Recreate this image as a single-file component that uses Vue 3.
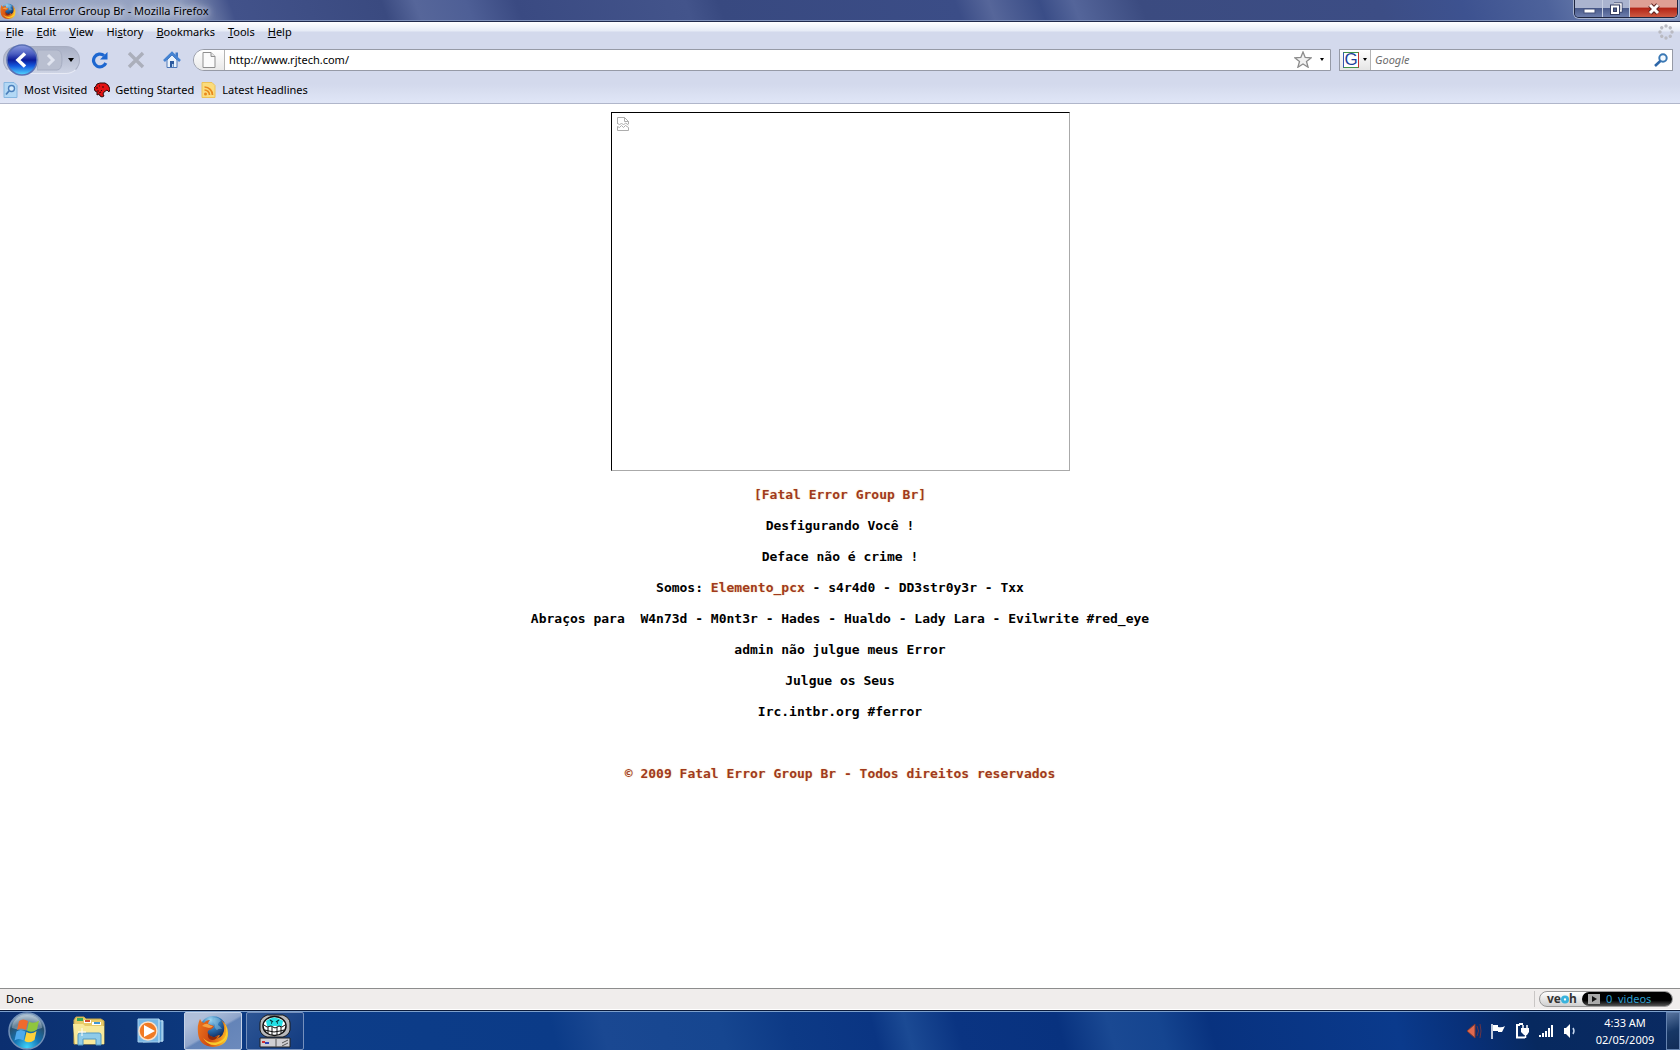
<script setup>
import { ref } from 'vue'

const menus = [
  ['', 'F', 'ile'],
  ['', 'E', 'dit'],
  ['', 'V', 'iew'],
  ['Hi', 's', 'tory'],
  ['', 'B', 'ookmarks'],
  ['', 'T', 'ools'],
  ['', 'H', 'elp'],
]
const address = ref('http://www.rjtech.com/')
const query = ref('')
const dots = [0, 45, 90, 135, 180, 225, 270, 315]
</script>

<template>
  <div class="desktop">
    <header class="titlebar">
      <svg class="fox-small" viewBox="0 0 32 32" aria-hidden="true">
        <use href="#fox" />
      </svg>
      <h1 class="title">Fatal Error Group Br - Mozilla Firefox</h1>
      <div class="window-buttons">
        <button class="wb min" aria-label="Minimize">
          <svg width="14" height="14" viewBox="0 0 14 14"><rect x="2" y="7" width="11" height="4" fill="#fff" stroke="#43517c" /></svg>
        </button>
        <button class="wb max" aria-label="Restore">
          <svg width="14" height="14" viewBox="0 0 14 14">
            <path d="M5 2h7v7h-2" fill="none" stroke="#353f63" stroke-width="3" />
            <path d="M5 2h7v7h-2" fill="none" stroke="#fff" stroke-width="1.500" />
            <rect x="3" y="4.500" width="6" height="6.500" fill="none" stroke="#353f63" stroke-width="4" />
            <rect x="3" y="4.500" width="6" height="6.500" fill="none" stroke="#fff" stroke-width="2" />
          </svg>
        </button>
        <button class="wb close" aria-label="Close">
          <svg width="14" height="14" viewBox="0 0 14 14">
            <path d="M3 3l8 8M11 3l-8 8" stroke="#5e2320" stroke-width="5" />
            <path d="M3 3l8 8M11 3l-8 8" stroke="#fff" stroke-width="3" />
          </svg>
        </button>
      </div>
    </header>

    <div class="chrome">
      <nav class="menubar">
        <button v-for="m in menus" :key="m[2]" class="menu">{{ m[0] }}<u>{{ m[1] }}</u>{{ m[2] }}</button>
        <svg class="throbber" width="16" height="16" viewBox="0 0 16 16" aria-hidden="true">
          <circle v-for="d in dots" :key="d" cx="8" cy="2" r="1.700" fill="#b9bac2" :transform="`rotate(${d} 8 8)`" />
        </svg>
      </nav>

      <div class="navbar">
        <div class="backforward">
          <button class="plain back" aria-label="Back">
            <svg width="32" height="32" viewBox="0 0 32 32">
              <defs>
                <linearGradient id="backfill" x1="0" y1="0" x2="0" y2="1">
                  <stop offset="0" stop-color="#8d9ce0" />
                  <stop offset=".3" stop-color="#4a5dc0" />
                  <stop offset=".5" stop-color="#0c1c9a" />
                  <stop offset=".7" stop-color="#1458de" />
                  <stop offset="1" stop-color="#56dcff" />
                </linearGradient>
              </defs>
              <circle cx="16" cy="16" r="15" fill="url(#backfill)" stroke="#5a70b4" stroke-width="1.500" />
              <path d="M19 9.500l-7 6.500 7 6.500" fill="none" stroke="#fff" stroke-width="3.500" />
            </svg>
          </button>
          <button class="plain forward" aria-label="Forward">
            <svg width="26" height="22" viewBox="0 0 26 22">
              <path d="M0 1h20q5 0 5 10t-5 10h-20q3-10 0-20z" fill="#b9bfd0" stroke="#a6adc2" />
              <path d="M11 6l5 5-5 5" fill="none" stroke="#e1e5f0" stroke-width="3" />
            </svg>
          </button>
          <button class="plain recent" aria-label="Recent pages"><i class="caret"></i></button>
        </div>
        <button class="plain tool" aria-label="Reload">
          <svg width="18" height="18" viewBox="0 0 18 18">
            <path d="M14.800 12A6.400 6.400 0 1 1 13 4.500" fill="none" stroke="#1d67d0" stroke-width="3.200" />
            <path d="M16.500 1v7.500h-7.500z" fill="#1d67d0" />
          </svg>
        </button>
        <button class="plain tool" aria-label="Stop">
          <svg width="18" height="18" viewBox="0 0 18 18"><path d="M2 2l14 14M16 2L2 16" stroke="#abafbb" stroke-width="3.400" /></svg>
        </button>
        <button class="plain tool" aria-label="Home">
          <svg width="18" height="18" viewBox="0 0 18 18">
            <path d="M4 9v7.500h10V9L9 4z" fill="#eaf2fb" stroke="#4e78b8" />
            <path d="M12.500 1.500h2.500v5l-2.500-2z" fill="#4178c4" />
            <path d="M1 10L9 2l8 8" fill="none" stroke="#4583d2" stroke-width="2.600" />
            <path d="M7 16v-6h4v6" fill="#2c5a9e" />
            <path d="M9 13h1.500v3H9z" fill="#bcd7f3" />
          </svg>
        </button>

        <div class="urlbox">
          <span class="identity">
            <svg width="14" height="16" viewBox="0 0 14 16" aria-hidden="true">
              <path d="M1 .5h8l4 4v11H1z" fill="#fbfbfb" stroke="#8f8f8f" />
              <path d="M9 .5v4h4" fill="#e5e5e5" stroke="#8f8f8f" />
            </svg>
          </span>
          <input v-model="address" class="field" aria-label="Address" />
          <button class="plain star" aria-label="Bookmark this page">
            <svg width="18" height="17" viewBox="0 0 18 17">
              <path d="M9 1l2.200 5.500 5.800.4-4.500 3.600 1.600 5.700L9 13l-5.100 3.200 1.600-5.700L1 6.900l5.800-.4z" fill="#f1f1f1" stroke="#8c8c8c" stroke-width="1.300" />
            </svg>
          </button>
          <button class="plain drop" aria-label="History list"><i class="caret small"></i></button>
        </div>

        <div class="searchbox">
          <button class="plain engine" aria-label="Search engine">
            <span class="g">G</span><i class="caret small"></i>
          </button>
          <input v-model="query" class="field search" placeholder="Google" aria-label="Search" />
          <button class="plain go" aria-label="Search now">
            <svg width="14" height="14" viewBox="0 0 14 14">
              <circle cx="9" cy="5" r="3.700" fill="#f3f9ff" stroke="#3a78b4" stroke-width="2" />
              <path d="M6.300 8L1 13" stroke="#2d66a8" stroke-width="2.500" />
            </svg>
          </button>
        </div>
      </div>

      <div class="bookmarks">
        <a href="#" class="mark">
          <svg width="16" height="16" viewBox="0 0 16 16" aria-hidden="true">
            <path d="M1 .5h10l3 3v12H1z" fill="#b3d8f5" stroke="#86b6e0" />
            <circle cx="8.500" cy="6.500" r="3" fill="#d9edfc" stroke="#4b7fbb" stroke-width="1.400" />
            <path d="M6 9l-3 3.500" stroke="#4b7fbb" stroke-width="1.800" />
          </svg>
          Most Visited
        </a>
        <a href="#" class="mark">
          <svg width="16" height="16" viewBox="0 0 16 16" aria-hidden="true">
            <path d="M0 6l2-2 1-2 3-1 5 0 3 2 2 4-1 3-2-2-3 2-1 2 1 2-2 1-2-1-1-2-2 1 0-3-2-1z" fill="#e31212" stroke="#2c0808" />
            <path d="M2 6h2M3 9h2M5 4h1M5 11l2-1M8 5h2M7 8l1 1" stroke="#3b0505" />
          </svg>
          Getting Started
        </a>
        <a href="#" class="mark">
          <svg width="16" height="16" viewBox="0 0 16 16" aria-hidden="true">
            <path d="M1 .5h10l3 3v12H1z" fill="#fbdc7c" stroke="#ecc155" />
            <circle cx="4.500" cy="12" r="1.500" fill="#e8891c" />
            <path d="M3.500 8a5 5 0 0 1 5 5M3.500 5a8 8 0 0 1 8 8" fill="none" stroke="#e8891c" stroke-width="1.700" />
          </svg>
          Latest Headlines
        </a>
      </div>
    </div>

    <main class="page">
      <div class="missing">
        <svg width="12" height="14" viewBox="0 0 12 14" role="img" aria-label="Broken image">
          <path d="M.5 7V.5h7l4 4V7M7.500.5v4h4M.5 6l2 2 2-2 2 2 2-2 3 2M.5 13.500v-4l2 1 2-2 2 2 2-2 3 2v3z" fill="none" stroke="#adadad" />
        </svg>
      </div>
      <p class="rust">[Fatal Error Group Br]</p>
      <p>Desfigurando Você !</p>
      <p>Deface não é crime !</p>
      <p>Somos: <span class="rust">Elemento_pcx</span> - s4r4d0 - DD3str0y3r - Txx</p>
      <p>Abraços para&nbsp; W4n73d - M0nt3r - Hades - Hualdo - Lady Lara - Evilwrite #red_eye</p>
      <p>admin não julgue meus Error</p>
      <p>Julgue os Seus</p>
      <p>Irc.intbr.org #ferror</p>
      <p class="rust legal">© 2009 Fatal Error Group Br - Todos direitos reservados</p>
    </main>

    <footer class="status">
      <span>Done</span>
      <div class="veoh-cell">
        <div class="veoh">
          <span class="brand">ve<svg width="8" height="9" viewBox="0 0 9 9" aria-hidden="true"><circle cx="4.500" cy="4.500" r="4.500" fill="#39b3dc" /><circle cx="4.500" cy="4.500" r="1.300" fill="#fff" /></svg>h</span>
          <span class="videos">
            <svg width="12" height="10" viewBox="0 0 12 10" aria-hidden="true"><rect width="12" height="10" fill="#aaa" /><path d="M4 2l5 3-5 3z" fill="#111" /></svg>
            <span>0&nbsp; videos</span>
          </span>
        </div>
      </div>
    </footer>

    <div class="taskbar">
      <button class="plain start" aria-label="Start">
        <svg width="40" height="40" viewBox="0 0 40 40">
          <defs>
            <radialGradient id="orb" cx=".5" cy=".95" r=".9">
              <stop offset="0" stop-color="#3fd4fb" />
              <stop offset=".4" stop-color="#1474b4" />
              <stop offset=".75" stop-color="#28506f" />
              <stop offset="1" stop-color="#9fb8cc" />
            </radialGradient>
          </defs>
          <circle cx="20" cy="20" r="18" fill="url(#orb)" stroke="#7391b8" stroke-width="1.500" />
          <path d="M5 17a15 13 0 0 1 30 0q-15 5-30 0z" fill="#fff" opacity=".3" />
          <path d="M12 10q4-3 9 0l-2 9q-5-3-9 0z" fill="#ef6a2d" />
          <path d="M22 10.500q5 3 10-1l-2 9q-5 4-10 1z" fill="#90c63d" />
          <path d="M9.500 20.500q4-3 9 0l-2 9q-5-3-9 0z" fill="#4eaaed" />
          <path d="M19.500 21q5 3 10-1l-2 9q-5 4-10 1z" fill="#fcd13c" />
        </svg>
      </button>
      <button class="plain task" aria-label="Explorer">
        <svg width="34" height="32" viewBox="0 0 34 32">
          <path d="M2 5l2-3h8l2 2h15l3 2v23H2z" fill="#e8ca68" stroke="#c4a74a" />
          <path d="M5 3h6v3H5z" fill="#39a957" /><path d="M12 5h7v3h-7z" fill="#fff" /><path d="M13 5h5v2h-5z" fill="#d6512d" />
          <path d="M20 7h9v3h-9z" fill="#fff" /><path d="M22 7h6v2h-6z" fill="#4097d3" />
          <path d="M1 9h10l2 2h19v18H3z" fill="#f8e99b" />
          <path d="M6 30V20q0-2 2-2h19q2 0 2 2v10h-5v-6H11v6z" fill="#8fcbe8" stroke="#5399c4" />
          <path d="M10 13v8M6 17h8" stroke="#fff" />
        </svg>
      </button>
      <button class="plain task" aria-label="Media player">
        <svg width="28" height="28" viewBox="0 0 28 28">
          <path d="M6 3l20 1v20l-20 1z" fill="#5a9fd4" stroke="#a9d4f0" />
          <path d="M1 2h21v23H1z" fill="#78b7e4" stroke="#a4cfee" /><path d="M22 2v24M25 3v22" stroke="#c1e0f5" />
          <circle cx="11" cy="14" r="9" fill="#f17a24" stroke="#fbe1c9" stroke-width="1.500" />
          <path d="M7 8l11 6-11 6z" fill="#fff" />
        </svg>
      </button>
      <button class="plain task open active" aria-label="Firefox">
        <svg width="32" height="32" viewBox="0 0 32 32">
          <defs>
            <linearGradient id="foxfur" x1="0" y1=".3" x2="1" y2=".6">
              <stop offset="0" stop-color="#e8701c" />
              <stop offset=".5" stop-color="#cf4a12" />
              <stop offset=".8" stop-color="#f08a1a" />
              <stop offset="1" stop-color="#fbd12c" />
            </linearGradient>
            <radialGradient id="globe" cx=".4" cy=".15" r=".8">
              <stop offset="0" stop-color="#9cd6f0" />
              <stop offset=".45" stop-color="#2f78b8" />
              <stop offset="1" stop-color="#0b1a4c" />
            </radialGradient>
          </defs>
          <g id="fox">
            <circle cx="16" cy="14" r="13" fill="url(#globe)" />
            <path d="M17 3q5-1 7 3-3 1-3 4 2 1 4 4-3-1-5 1-3-2-2-5-3-3-1-7z" fill="#8dc3e2" opacity=".5" />
            <path d="M3 4q1 3 4 4 2-3 6-3-2 2-2 4 3 1 6 2-1 3-5 4-2 1-1 4 3 4 7 3 3-2 5-2-1 4-7 4 9 0 11-8 1-6-3-11 7 5 7 13 0 13-15 14Q2 31 1 18 0 10 3 4z" fill="url(#foxfur)" />
            <path d="M27 7q7 16-6 20-9 2-15-4 5 8 13 7 13-3 11-16-1-4-3-7z" fill="#fbd531" opacity=".9" />
            <path d="M11 18q2 4 6 4 3 0 4-2-1 5-6 5-5-1-4-7z" fill="#8f2a0a" />
            <path d="M5 11q3-3 6-2 2 2 5 2-1 2-4 2-4-1-7-2z" fill="#f6a041" />
          </g>
        </svg>
      </button>
      <button class="plain task open" aria-label="Messenger">
        <svg width="34" height="34" viewBox="0 0 34 34">
          <path d="M2 24h30v9H2z" fill="#cfcfd3" stroke="#222" />
          <path d="M9 1h16q7 3 7 8v7q-1 5-7 7H9q-6-2-7-7V9q0-5 7-8z" fill="#b9b9bb" stroke="#1a1a1a" />
          <ellipse cx="16.500" cy="12" rx="11.500" ry="9.500" fill="#fff" stroke="#111" stroke-width="1.500" />
          <path d="M8 7q8-7 17 0l-1 5H9z" fill="#25dfe5" />
          <path d="M12 6l3 2M21 6l-3 2M13 9h1M19 9h1" stroke="#063b3f" stroke-width="1.500" />
          <path d="M6 11l3 2 4-1 4 2 4-2 3 1 3-2M7 16l4 1 5 1 6-1 4-1M10 13v6M14 13v8M19 13v8M23 13v6" fill="none" stroke="#111" />
          <path d="M4 27h3v2H4z" fill="#d23030" /><path d="M7 28h4v2H7z" fill="#3146b8" />
          <path d="M24 29l6-3M24 32l6-3M18 25v8" stroke="#555" />
        </svg>
      </button>

      <div class="tray">
        <svg width="16" height="16" viewBox="0 0 16 16" aria-hidden="true"><path d="M1 8l8-7v14z" fill="#e06a50" stroke="#81382f" /><path d="M11 3q3 5 0 10M14 1q2 7 0 14" fill="none" stroke="#6b3444" /></svg>
        <svg width="16" height="16" viewBox="0 0 16 16" aria-hidden="true"><path d="M2 1v15" stroke="#fff" stroke-width="1.500" /><path d="M3 2h5v2q4 1 7-1l-3 6H8V8H3z" fill="#fff" /></svg>
        <svg width="16" height="16" viewBox="0 0 16 16" aria-hidden="true">
          <path d="M6 2H3v12.500h8" fill="none" stroke="#fff" stroke-width="2" />
          <path d="M5 0h4v2H5z" fill="#fff" />
          <path d="M7 5h8v4l-2 3h-3L7 9z" fill="#fff" />
          <path d="M9 2v4M13 2v4M11.500 11v4" stroke="#fff" stroke-width="1.500" />
        </svg>
        <svg width="16" height="16" viewBox="0 0 16 16" aria-hidden="true"><path d="M2 12v2M5 10v4M8 8v6M11 5v9M14 2v12" stroke="#fff" stroke-width="2" /></svg>
        <svg width="16" height="16" viewBox="0 0 16 16" aria-hidden="true"><path d="M2 5h2l4-4v14l-4-4H2z" fill="#fff" /><path d="M11 5q2 3 0 6" fill="none" stroke="#c5d6ee" stroke-width="1.500" /></svg>
      </div>
      <time class="clock" datetime="2009-05-02T04:33"><span>4:33 AM</span><span>02/05/2009</span></time>
      <button class="peek" aria-label="Show desktop"></button>
    </div>
  </div>
</template>

<style>
body {
  margin: 0;
}
</style>

<style scoped>
.desktop {
  display: flex;
  flex-direction: column;
  min-height: 100vh;
  background: #fff;
  color: #000;
  font: 11px/16px "Noto Sans", "Open Sans", sans-serif;
}
button,
input {
  font: inherit;
  color: inherit;
}
svg {
  display: block;
  flex: none;
}
.plain {
  display: flex;
  align-items: center;
  justify-content: center;
  padding: 0;
  border: 0;
  background: none;
}

.titlebar {
  display: flex;
  align-items: center;
  box-sizing: border-box;
  height: 22px;
  border-bottom: 1px solid #202a4c;
  box-shadow: inset 0 -1px #7f90b8;
  background: linear-gradient(70deg, #a3afca 0, #909dbe 11%, #42528a 14%, #3a4a80 23%, #56669a 25%, #4e5f96 28%, #3a4a82 31%, #43548b 41%, #384980 43%, #3b4d87 57%, #56669a 59%, #3a4d87 62%, #54659a 64%, #3b4b80 68%, #3c4d85 82%, #3d5290 87%, #4d629b 92%, #8294bd 98%);
}
.fox-small {
  width: 16px;
  height: 16px;
}
.title {
  flex: 1;
  margin: 0 0 0 5px;
  font-size: 11px;
  font-weight: 400;
  text-shadow: 0 0 6px #fff, 0 0 10px #dfe5f2;
}
.window-buttons {
  display: flex;
  align-self: flex-start;
  margin-right: 2px;
  border: 1px solid #1d2540;
  border-top: 0;
  border-radius: 0 0 5px 5px;
  box-shadow: 0 0 0 1px #a5b1cc;
  overflow: hidden;
}
.wb {
  display: flex;
  align-items: center;
  justify-content: center;
  width: 28px;
  height: 17px;
  padding: 0;
  border: 0;
  border-right: 1px solid #c6cfe2;
  background: linear-gradient(#aab4cf 45%, #495a8a 50%, #6d7ead);
}
.max {
  width: 27px;
}
.close {
  width: 47px;
  border: 0;
  background: linear-gradient(#df9f94 40%, #b42617 50%, #cd5a43);
}

.chrome {
  border-bottom: 1px solid #b0b6ca;
  background: linear-gradient(#fff 0, #e6ebf6 9px, #d3d9ec 10px, #d3d9ec 62px, #e0e6f7);
}
.menubar {
  display: flex;
  align-items: center;
  height: 20px;
  padding: 0 6px;
}
.menu {
  margin-right: 13px;
  padding: 0;
  border: 0;
  background: none;
}
.throbber {
  margin-left: auto;
}
.navbar {
  display: flex;
  align-items: center;
  height: 35px;
  padding: 0 7px 0 3px;
}
.backforward {
  display: flex;
  align-items: center;
  box-sizing: border-box;
  width: 77px;
  height: 28px;
  margin-right: 10px;
  padding-left: 2px;
  border: 1px solid #a8aec2;
  border-bottom-color: #e7eaf5;
  border-radius: 14px;
  background: linear-gradient(#aab1c6, #cdd3e4);
}
.forward {
  margin-left: -1px;
}
.recent {
  width: 16px;
  height: 26px;
}
.caret {
  border: 3px solid transparent;
  border-top: 4px solid #000;
  border-bottom: 0;
}
.caret.small {
  border-width: 3px 2px 0;
}
.tool {
  width: 20px;
  margin-right: 16px;
}
.urlbox,
.searchbox {
  display: flex;
  box-sizing: border-box;
  height: 22px;
  border: 1px solid #969aa6;
  background: #fff;
}
.urlbox {
  flex: 1;
  margin-right: 8px;
  margin-left: -5px;
  border-radius: 11px 0 0 11px;
  overflow: hidden;
}
.searchbox {
  width: 334px;
}
.identity {
  display: flex;
  align-items: center;
  justify-content: center;
  width: 30px;
  border-right: 1px solid #b4b4b4;
  background: linear-gradient(#fff, #e9e9e9);
}
.field {
  flex: 1;
  min-width: 0;
  padding: 0 4px;
  border: 0;
  outline: 0;
  background: none;
}
.search::placeholder {
  color: #6d6d6d;
  font-style: italic;
  opacity: 1;
}
.star {
  width: 22px;
}
.drop {
  width: 16px;
}
.engine {
  gap: 4px;
  width: 31px;
  border-right: 1px solid #b4b4b4;
  background: linear-gradient(#fff, #e5e5e5);
}
.g {
  width: 14px;
  border: 1px solid #42934a;
  border-right-color: #c03535;
  border-left-color: #3557b0;
  background: #fff;
  color: #1c3f9a;
  font: 17px/14px "Liberation Sans", sans-serif;
}
.go {
  width: 22px;
}
.bookmarks {
  display: flex;
  align-items: center;
  height: 26px;
  padding-left: 3px;
}
.mark {
  display: flex;
  align-items: center;
  gap: 5px;
  margin-right: 7px;
  color: inherit;
  text-decoration: none;
}

.page {
  flex: 1;
  padding: 8px;
  font: bold 13px/15px "DejaVu Sans Mono", "Liberation Mono", monospace;
  text-align: center;
}
.page p {
  margin: 0 0 16px;
}
.missing {
  box-sizing: border-box;
  width: 459px;
  height: 359px;
  margin: 0 auto 16px;
  padding: 4px 5px;
  border: 1px solid #000;
  border-right-color: #aaa;
  border-bottom-color: #aaa;
}
.rust {
  color: #a03a1c;
  text-shadow: 0 0 2px #f6dcae;
}
.page .legal {
  margin-top: 47px;
}

.status {
  display: flex;
  align-items: center;
  justify-content: space-between;
  box-sizing: border-box;
  height: 22px;
  padding-left: 6px;
  border-top: 1px solid #8d8d8d;
  border-bottom: 1px solid #fff;
  background: #f0edec;
}
.veoh-cell {
  padding: 0 7px 0 4px;
  border-left: 1px solid #c9c6c5;
}
.veoh {
  display: flex;
  align-items: center;
  justify-content: space-between;
  box-sizing: border-box;
  width: 134px;
  height: 16px;
  padding-left: 7px;
  border: 1px solid #999;
  border-radius: 8px;
  background: linear-gradient(#fff, #cfcfcf);
}
.brand {
  display: flex;
  align-items: center;
  color: #333;
  font-size: 12px;
  font-weight: 700;
}
.videos {
  display: flex;
  align-items: center;
  gap: 6px;
  box-sizing: border-box;
  width: 90px;
  height: 14px;
  padding-left: 6px;
  border-radius: 7px;
  background: linear-gradient(#000 60%, #555);
  color: #2c9fd0;
}

.taskbar {
  display: flex;
  align-items: center;
  box-sizing: border-box;
  height: 40px;
  border-top: 1px solid #0a1a3a;
  box-shadow: inset 0 1px #7da0cc;
  background: linear-gradient(75deg, #0b2f70 0, #0c3577 8%, #0d3d88 18%, #0b3b88 33%, #1a4892 36%, #164690 43%, #0d3a86 47%, #0a3583 52%, #1b4a94 54%, #0a3482 57%, #08327f 63%, #1a4993 66%, #154590 69%, #08327f 72%, #0a3a8c 83%, #083079 87%, #07295f 91%, #0a2a62 100%);
}
.start {
  width: 54px;
}
.task {
  box-sizing: border-box;
  width: 58px;
  height: 38px;
  margin-right: 4px;
}
.start + .task {
  margin-left: 6px;
}
.open {
  border: 1px solid #7590bd;
  border-radius: 2px;
  background: linear-gradient(135deg, #2d5594, #123b80);
}
.active {
  border-color: #c4d2e8;
  background: linear-gradient(150deg, #b0bfda 20%, #8fa5cb 50%, #6484b8 54%, #6c8abc);
}
.tray {
  display: flex;
  gap: 8px;
  margin-left: auto;
}
.clock {
  display: flex;
  flex-direction: column;
  width: 78px;
  margin-left: 8px;
  color: #fff;
  line-height: 17px;
  text-align: center;
}
.peek {
  width: 14px;
  height: 38px;
  margin-left: 2px;
  padding: 0;
  border: 1px solid #6583b0;
  background: linear-gradient(160deg, #58749f, #173766 50%, #112c58);
}
</style>
